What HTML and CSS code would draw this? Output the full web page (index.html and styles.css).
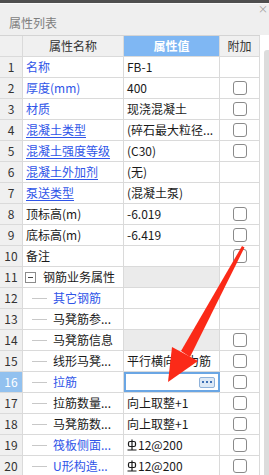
FILE: index.html
```html
<!DOCTYPE html>

<html lang="zh">
    <head>
        <title>属性列表</title>

        <link rel="stylesheet" href="styles.css">

    </head>

    <body>
        <div class="topbar"></div>
        <div class="titlebar">
            <span>属性列表</span>
            <span class="close">×</span>
        </div>

        <div class="panel">
            <div class="grid">
                <div class="row head">
                    <div class="c idx"></div>
                    <div class="c name">属性名称</div>
                    <div class="c val current">属性值</div>
                    <div class="c add">附加</div>
                </div>

                <div class="row">
                    <div class="c idx">1</div>
                    <div class="c name link">名称</div>
                    <div class="c val">FB-1</div>
                    <div class="c add"></div>
                </div>
                <div class="row">
                    <div class="c idx">2</div>
                    <div class="c name link">厚度(mm)</div>
                    <div class="c val">400</div>
                    <div class="c add"><span class="box"></span></div>
                </div>
                <div class="row">
                    <div class="c idx">3</div>
                    <div class="c name link">材质</div>
                    <div class="c val">现浇混凝土</div>
                    <div class="c add"><span class="box"></span></div>
                </div>
                <div class="row">
                    <div class="c idx">4</div>
                    <div class="c name link under">混凝土类型</div>
                    <div class="c val">(碎石最大粒径...</div>
                    <div class="c add"><span class="box"></span></div>
                </div>
                <div class="row">
                    <div class="c idx">5</div>
                    <div class="c name link under">混凝土强度等级</div>
                    <div class="c val">(C30)</div>
                    <div class="c add"><span class="box"></span></div>
                </div>
                <div class="row">
                    <div class="c idx">6</div>
                    <div class="c name link under">混凝土外加剂</div>
                    <div class="c val">(无)</div>
                    <div class="c add"></div>
                </div>
                <div class="row">
                    <div class="c idx">7</div>
                    <div class="c name link under">泵送类型</div>
                    <div class="c val">(混凝土泵)</div>
                    <div class="c add"></div>
                </div>
                <div class="row">
                    <div class="c idx">8</div>
                    <div class="c name">顶标高(m)</div>
                    <div class="c val">-6.019</div>
                    <div class="c add"><span class="box"></span></div>
                </div>
                <div class="row">
                    <div class="c idx">9</div>
                    <div class="c name">底标高(m)</div>
                    <div class="c val">-6.419</div>
                    <div class="c add"><span class="box"></span></div>
                </div>
                <div class="row">
                    <div class="c idx">10</div>
                    <div class="c name">备注</div>
                    <div class="c val"></div>
                    <div class="c add"><span class="box"></span></div>
                </div>
                <div class="row">
                    <div class="c idx">11</div>
                    <div class="c name group"><span class="fold"></span>钢筋业务属性</div>
                    <div class="c val grey"></div>
                    <div class="c add"></div>
                </div>
                <div class="row">
                    <div class="c idx">12</div>
                    <div class="c name sub link">其它钢筋</div>
                    <div class="c val"></div>
                    <div class="c add"></div>
                </div>
                <div class="row">
                    <div class="c idx">13</div>
                    <div class="c name sub">马凳筋参...</div>
                    <div class="c val"></div>
                    <div class="c add"></div>
                </div>
                <div class="row">
                    <div class="c idx">14</div>
                    <div class="c name sub">马凳筋信息</div>
                    <div class="c val grey"></div>
                    <div class="c add"><span class="box"></span></div>
                </div>
                <div class="row">
                    <div class="c idx">15</div>
                    <div class="c name sub">线形马凳...</div>
                    <div class="c val">平行横向受力筋</div>
                    <div class="c add"><span class="box"></span></div>
                </div>
                <div class="row">
                    <div class="c idx active">16</div>
                    <div class="c name sub link">拉筋</div>
                    <div class="c val edit">
                        <span class="more"><i></i><i></i><i></i></span>
                    </div>
                    <div class="c add"><span class="box"></span></div>
                </div>
                <div class="row">
                    <div class="c idx">17</div>
                    <div class="c name sub">拉筋数量...</div>
                    <div class="c val">向上取整+1</div>
                    <div class="c add"><span class="box"></span></div>
                </div>
                <div class="row">
                    <div class="c idx">18</div>
                    <div class="c name sub">马凳筋数...</div>
                    <div class="c val">向上取整+1</div>
                    <div class="c add"><span class="box"></span></div>
                </div>
                <div class="row">
                    <div class="c idx">19</div>
                    <div class="c name sub link">筏板侧面...</div>
                    <div class="c val"><svg class="bar" viewBox="0 0 10 12"><rect x="1.5" y="2.5" width="7" height="5" rx="1.5"/><path d="M5 0.5v11M0.5 11h9"/></svg>12@200</div>
                    <div class="c add"><span class="box"></span></div>
                </div>
                <div class="row">
                    <div class="c idx">20</div>
                    <div class="c name sub link">U形构造...</div>
                    <div class="c val"><svg class="bar" viewBox="0 0 10 12"><rect x="1.5" y="2.5" width="7" height="5" rx="1.5"/><path d="M5 0.5v11M0.5 11h9"/></svg>12@200</div>
                    <div class="c add"><span class="box"></span></div>
                </div>
            </div>

            <div class="scroll"><div class="thumb"></div></div>
        </div>

        <!-- red annotation arrow drawn over the grid -->
        <svg class="arrow" viewBox="0 0 269 475">
            <polygon points="242,246 244.5,247.5 190,357 181,351"/>
            <polygon points="172,347 198,361 168,382"/>
        </svg>
    </body>
</html>
```

FILE: styles.css
```css
* {
    box-sizing: border-box;
}

body {
    margin: 0;
    width: 269px;
    height: 475px;
    overflow: hidden;
    position: relative;
    background: #fff;
    color: #1a1a1a;
    font-family: "Noto Sans CJK SC", "Microsoft YaHei", sans-serif;
    font-size: 12px;
    line-height: 20px;
}

.topbar {
    height: 3px;
    background: #4f4f4f;
}

.titlebar {
    height: 32px;
    background: #efefef;
    border-top: 1px solid #fafafa;
    display: flex;
    justify-content: space-between;
    padding-left: 9px;
    color: #7d7d7d;
    line-height: 38px;
}

.close {
    font-size: 10px;
    line-height: 10px;
    color: #a0a0a0;
    margin-right: 1px;
}

.panel {
    display: flex;
}

.grid {
    width: 260px;
}

.row {
    display: flex;
    height: 21px;
    border-bottom: 1px solid #dadada;
}

.row.head {
    height: 22px;
    border-top: 1px solid #d4d4d4;
    background: #f0f0f0;
    text-align: center;
    color: #333;
}

.c {
    border-right: 1px solid #dadada;
    white-space: nowrap;
    overflow: hidden;
}

.idx {
    width: 23px;
    background: #f0f0f0;
    text-align: center;
    color: #333;
}

.idx.active {
    background: #92c1ef;
    color: #fff;
}

.name {
    width: 101px;
    padding-left: 3px;
}

.head .name {
    padding-left: 0;
}

.val {
    width: 96px;
    padding-left: 3px;
}

.head .val {
    padding-left: 0;
}

.add {
    width: 40px;
    display: flex;
    justify-content: center;
    align-items: center;
}

.current {
    background: #7fb7f3;
    color: #fff;
    font-weight: bold;
}

.link {
    color: #2f55e8;
}

.under {
    text-decoration: underline;
    text-underline-offset: 2px;
}

.grey {
    background: #ebebeb;
}

.group {
    display: flex;
    align-items: center;
    padding-left: 2px;
}

.fold {
    width: 11px;
    height: 11px;
    border: 1px solid #8c8c8c;
    margin-right: 7px;
    position: relative;
    flex: none;
}

.fold::after {
    content: "";
    position: absolute;
    left: 2px;
    top: 4px;
    width: 5px;
    height: 1px;
    background: #444;
}

.sub {
    padding-left: 30px;
    position: relative;
}

.sub::before {
    content: "";
    position: absolute;
    left: 9px;
    top: 10px;
    width: 15px;
    height: 1px;
    background: #c8c8c8;
}

.box {
    width: 14px;
    height: 14px;
    border: 1.5px solid #8a8a8a;
    border-radius: 3px;
    background: #fff;
}

.edit {
    border: 2px solid #6aa6e4;
    display: flex;
    justify-content: flex-end;
    align-items: center;
    padding-right: 3px;
}

.more {
    width: 16px;
    height: 11px;
    border: 1px solid #8fb2da;
    border-radius: 2px;
    background: #dde9f6;
    display: flex;
    justify-content: center;
    align-items: center;
    gap: 2px;
}

.more i {
    width: 2px;
    height: 2px;
    background: #3d6fb5;
}

.bar {
    width: 10px;
    height: 12px;
    margin-right: 1px;
    vertical-align: -1px;
    fill: none;
    stroke: #1a1a1a;
    stroke-width: 1.2;
}

.scroll {
    flex: 1;
    padding: 15px 0 0 4px;
}

.thumb {
    height: 440px;
    background: #dcdcdc;
    border-radius: 3px 0 0 0;
}

.arrow {
    position: absolute;
    left: 0;
    top: 0;
    width: 269px;
    height: 475px;
    pointer-events: none;
    fill: #fb2a18;
}
```
